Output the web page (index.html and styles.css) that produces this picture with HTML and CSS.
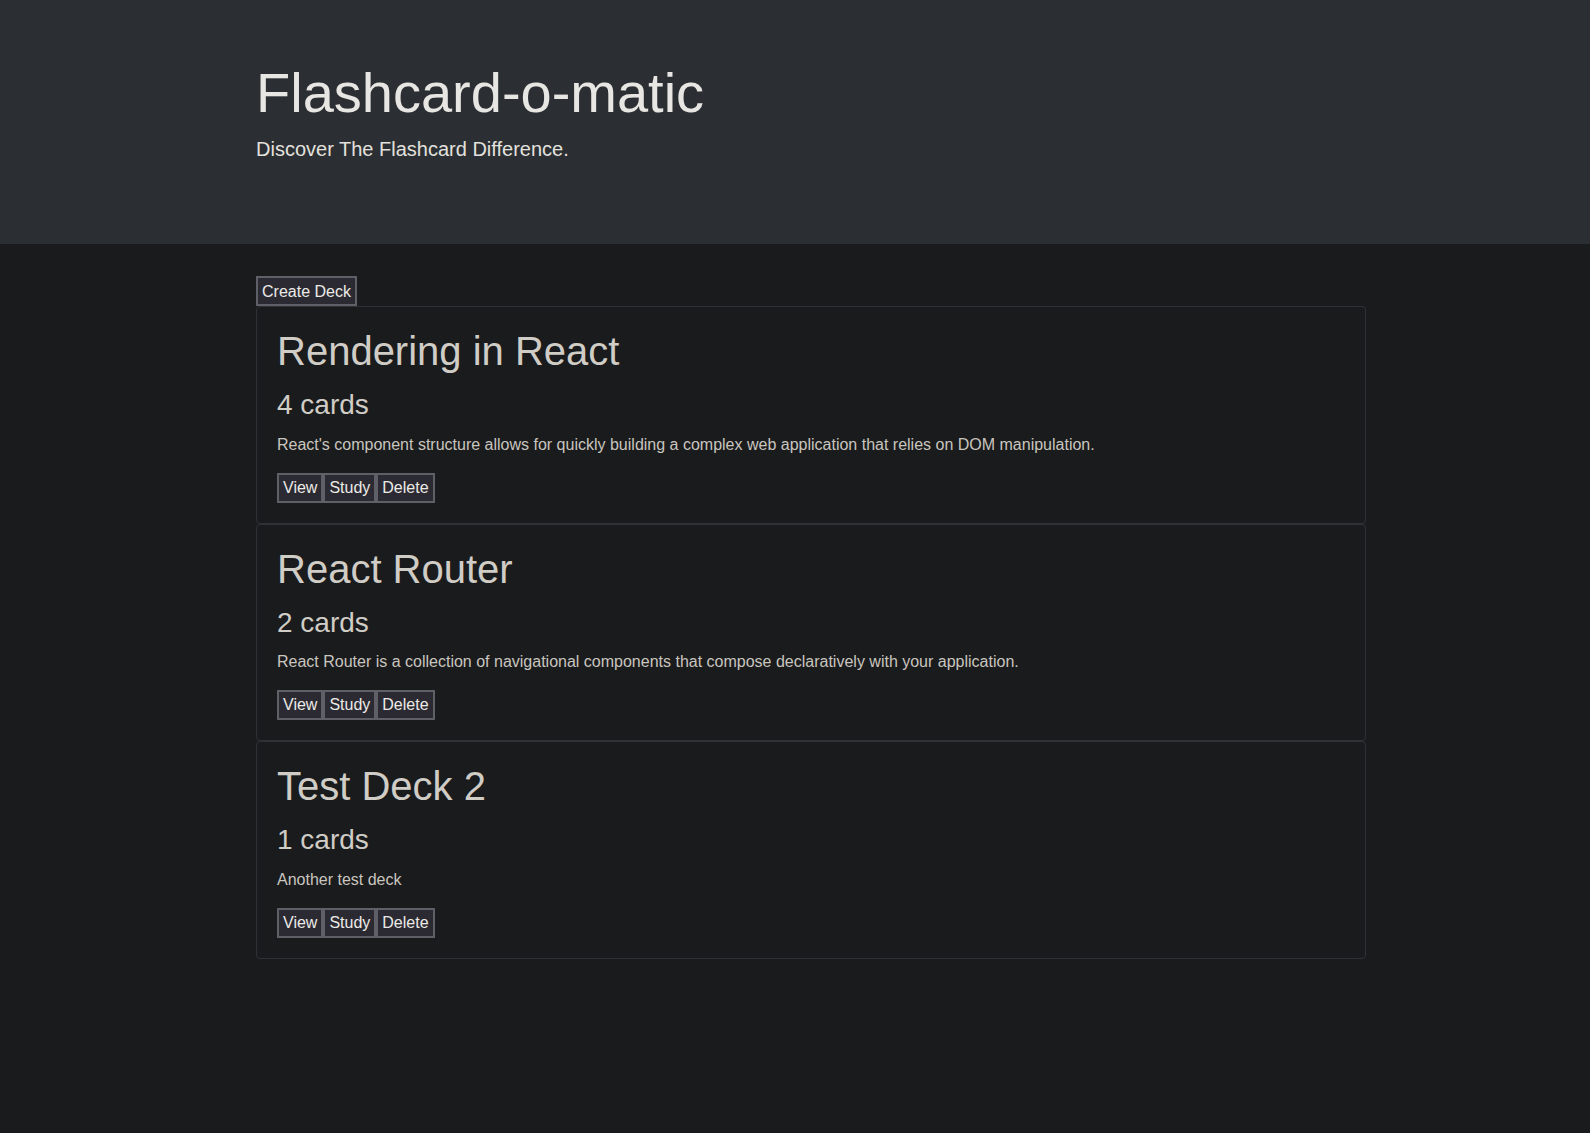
FILE: index.html
```html
<!DOCTYPE html>
<html lang="en">
<head>
<meta charset="utf-8">
<title>Flashcard-o-matic</title>
<link rel="stylesheet" href="styles.css">
</head>
<body>
<header class="jumbotron">
  <div class="container">
    <h1 class="display">Flashcard-o-matic</h1>
    <p class="lead">Discover The Flashcard Difference.</p>
  </div>
</header>
<main class="container">
  <button class="btn btn-create" type="button">Create Deck</button>
  <div class="deck-list">
    <div class="card">
      <h1 class="deck-title">Rendering in React</h1>
      <h3 class="deck-count">4 cards</h3>
      <p class="deck-desc">React's component structure allows for quickly building a complex web application that relies on DOM manipulation.</p>
      <div class="actions"><button class="btn" type="button">View</button><button class="btn" type="button">Study</button><button class="btn" type="button">Delete</button></div>
    </div>
    <div class="card">
      <h1 class="deck-title">React Router</h1>
      <h3 class="deck-count">2 cards</h3>
      <p class="deck-desc">React Router is a collection of navigational components that compose declaratively with your application.</p>
      <div class="actions"><button class="btn" type="button">View</button><button class="btn" type="button">Study</button><button class="btn" type="button">Delete</button></div>
    </div>
    <div class="card">
      <h1 class="deck-title">Test Deck 2</h1>
      <h3 class="deck-count">1 cards</h3>
      <p class="deck-desc">Another test deck</p>
      <div class="actions"><button class="btn" type="button">View</button><button class="btn" type="button">Study</button><button class="btn" type="button">Delete</button></div>
    </div>
  </div>
</main>
</body>
</html>
```
FILE: styles.css
```css
html, body {
  margin: 0;
  padding: 0;
}
body {
  background: #1a1b1d;
  color: #e8e6e3;
  font-family: "Liberation Sans", Arial, sans-serif;
  font-size: 16px;
  line-height: 1.5;
  min-height: 100vh;
}
.container {
  width: 1110px;
  margin-left: 256px;
}
.jumbotron {
  background: #2b2e32;
  padding: 59px 0 64px;
  margin-bottom: 32px;
}
.display {
  font-size: 56px;
  font-weight: 300;
  line-height: 1.2;
  margin: 0 0 8px;
  color: #e8e6e3;
}
.lead {
  font-size: 20px;
  font-weight: 300;
  margin: 0 0 16px;
  color: #e3e1de;
}
.btn {
  display: inline-block;
  font-family: inherit;
  font-size: 16px;
  line-height: 24px;
  padding: 1px 4px;
  margin: 0;
  color: #eceae7;
  background: #2b2a33;
  border: 2px solid #5f5f68;
  border-radius: 0;
  cursor: pointer;
}
.btn-create {
  padding: 2px 4px 0;
}
.deck-list {
  display: flex;
  flex-direction: column;
}
.card {
  border: 1px solid #2f3235;
  border-radius: 4px;
  padding: 20px;
  color: #d0ccc6;
}
.deck-title {
  font-size: 40px;
  font-weight: 500;
  line-height: 1.2;
  margin: 0 0 13px;
  color: #d0ccc6;
}
.deck-count {
  font-size: 28px;
  font-weight: 500;
  line-height: 1.2;
  margin: 0 0 11px;
  color: #d0ccc6;
}
.deck-desc {
  margin: 0 0 16px;
  color: #c9c5bf;
}
.actions {
  display: flex;
}
```
